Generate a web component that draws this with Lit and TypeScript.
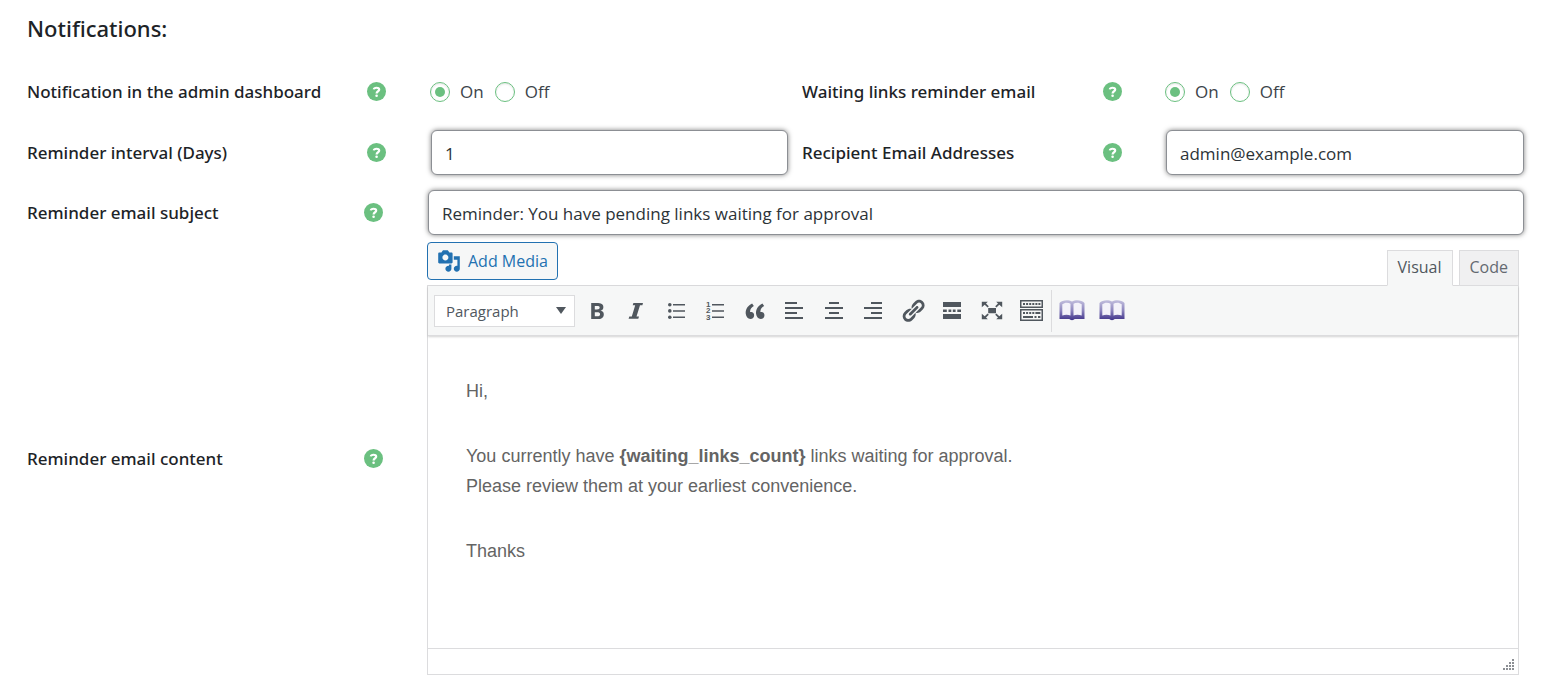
import { LitElement, html, css, svg } from "lit";
import type { SVGTemplateResult } from "lit";
import { customElement, property } from "lit/decorators.js";

const digits = (n: number, y: number) => svg`<text x="4" y=${y}>${n}</text>`;

const icons: Record<string, SVGTemplateResult> = {
  bold: svg`<g transform="translate(-1.2 .2) scale(1.4 1.23)"><path d="M6 4v13h4.54c1.37 0 2.46-.33 3.26-1 .8-.66 1.2-1.58 1.2-2.77 0-.84-.17-1.51-.51-2.01s-.9-.85-1.67-1.03v-.09c.57-.1 1.02-.4 1.36-.9s.51-1.13.51-1.91c0-1.14-.39-1.98-1.17-2.5C12.75 4.26 11.5 4 9.78 4H6zm2.57 5.15V6.26h1.36c.73 0 1.27.11 1.61.32.34.22.51.58.51 1.07 0 .54-.16.92-.47 1.15s-.82.35-1.51.35h-1.5zm0 2.19h1.6c1.44 0 2.16.53 2.16 1.61 0 .6-.17 1.05-.51 1.34s-.86.43-1.57.43H8.57v-3.38z"/></g>`,
  italic: svg`<path d="M10.4 5h9.6l-.6 2.2H17L13.5 18.600h2.500l-.7 2.200H5.600l.7-2.200h2.500L12.200 7.200H9.700z"/>`,
  bullets: svg`<circle cx="6.8" cy="6.7" r="1.8"/><circle cx="6.8" cy="12.9" r="1.8"/><circle cx="6.8" cy="19.2" r="1.8"/><path d="M10 6h12v1.5H10zM10 12.2h12v1.5H10zM10 18.6h12v1.5H10z"/>`,
  numbers: svg`<g font-family="Liberation Sans, sans-serif" font-size="8" font-weight="700">${digits(1, 9)}${digits(2, 15.4)}${digits(3, 21.8)}</g><path d="M10 6h12v1.5H10zM10 12.2h12v1.5H10zM10 18.6h12v1.5H10z"/>`,
  quote: svg`<g transform="translate(0 .4) scale(1.28)"><path d="M9.49 13.22c0-.74-.2-1.38-.61-1.9-.62-.78-1.83-.88-2.53-.72-.29-1.65 1.11-3.75 2.92-4.65L7.88 4c-2.73 1.3-5.42 4.28-4.96 8.05C3.21 14.43 4.59 16 6.54 16c.85 0 1.56-.25 2.12-.75s.83-1.18.83-2.03zm8.05 0c0-.74-.2-1.38-.61-1.9-.63-.78-1.83-.88-2.53-.72-.29-1.65 1.11-3.75 2.92-4.65L15.93 4c-2.73 1.3-5.41 4.28-4.95 8.05.29 2.38 1.66 3.95 3.61 3.95.85 0 1.56-.25 2.12-.75s.83-1.18.83-2.03z"/></g>`,
  left: svg`<path d="M4 4h12v2H4zM4 9h18v2H4zM4 14h12v2H4zM4 19h18v2H4z"/>`,
  center: svg`<path d="M8 4h10v2H8zM4 9h18v2H4zM8 14h10v2H8zM4 19h18v2H4z"/>`,
  right: svg`<path d="M11 4h11v2H11zM4 9h18v2H4zM11 14h11v2H11zM4 19h18v2H4z"/>`,
  link: svg`<g transform="translate(.1 -.1) scale(1.29)"><path d="M17.74 2.76c1.68 1.69 1.68 4.41 0 6.1l-1.53 1.52c-1.12 1.12-2.7 1.47-4.14 1.09l2.62-2.61.76-.77.76-.76c.84-.84.84-2.2 0-3.04-.84-.85-2.2-.85-3.04 0l-.77.76-3.38 3.38c-.37-1.44-.02-3.02 1.1-4.14l1.52-1.53c1.69-1.68 4.42-1.68 6.1 0zM8.59 13.43l5.34-5.34c.42-.42.42-1.1 0-1.52-.44-.43-1.13-.39-1.53 0l-5.33 5.34c-.42.42-.42 1.1 0 1.52.44.43 1.13.39 1.52 0zm-.76 2.29l4.14-4.15c.38 1.44.03 3.02-1.09 4.14l-1.52 1.53c-1.69 1.68-4.41 1.68-6.1 0-1.68-1.68-1.68-4.42 0-6.1l1.53-1.52c1.12-1.12 2.7-1.47 4.14-1.1l-4.14 4.15c-.85.84-.85 2.2 0 3.05.84.84 2.2.84 3.04 0z"/></g>`,
  more: svg`<path d="M4 4h18v5H4zM4 11.4h3.8V14H4zM9.500 11.4h2.800V14H9.500zM13.800 11.4h2.800V14h-2.800zM18.300 11.4H22V14h-3.700zM4 16h18v5H4z"/>`,
  expand: svg`<path d="M9.200 9.900h7.800v5.400H9.200zM2.800 3.800h6L7 5.500l2.800 2.800-1.200 1.200-2.900-2.700-2.900 2.400zM23.200 3.800v5.400l-2.900-2.400-2.900 2.700-1.200-1.200L19 5.500l-1.800-1.700zM2.800 21.200v-5.400l2.900 2.400 2.900-2.700 1.200 1.200L7 19.500l1.800 1.700zM23.200 21.200h-6l1.800-1.700-2.800-2.800 1.200-1.200 2.900 2.700 2.900-2.400z"/>`,
  keyboard: svg`<path fill-rule="evenodd" d="M2 2h23v8H2zM3.5 3.5v5h20v-5zM2 11h23v12H2zM3.5 12.5v9h20v-9z"/><path d="M5 5h2v2H5zM8.1 5h2v2h-2zM11.2 5h2v2h-2zM14.3 5h2v2h-2zM17.4 5h2v2h-2zM20.4 5h2v2h-2zM5 14h2v2H5zM8.1 14h2v2h-2zM11.2 14h2v2h-2zM14.3 14h2v2h-2zM17.400 14h5v2h-5zM5 18h10v2H5zM16.500 18h2v2h-2zM20 18h2.400v2H20z"/>`,
  book: svg`<defs><linearGradient id="ink" gradientUnits="userSpaceOnUse" x1="0" y1="2" x2="0" y2="22"><stop offset="0" stop-color="#c3c0de"/><stop offset=".5" stop-color="#8f88bf"/><stop offset="1" stop-color="#43368c"/></linearGradient></defs>
    <path fill="url(#ink)" d="M.5 5C3 1.800 9.500 1.200 13 3.600C16.500 1.200 23 1.800 25.500 5V21H15.500C15 22.500 11 22.500 10.500 21H.5z"/>
    <path fill="#f3f2f9" d="M3.300 6.200C5.500 4.300 9.200 4.100 11.500 5.800V17.600C9.500 16.400 6 16.400 3.300 17.400zM14.500 5.800C16.800 4.100 20.500 4.300 22.700 6.200V17.400C20 16.400 16.500 16.400 14.500 17.600z"/>`,
};

@customElement("help-tip")
class HelpTip extends LitElement {
  static styles = css`
    :host { display: block; line-height: 0; }
    .tip { appearance: none; border: 0; padding: 0; background: none; color: #6bc080; width: 19px; height: 19px; }
    .glyph { width: 19px; height: 19px; fill: currentColor; }
    .mark { fill: none; stroke: #fff; stroke-width: 2.2; }
    .point { fill: #fff; }
  `;
  render() {
    return html`<button class="tip" type="button" aria-label="Help">
      <svg class="glyph" viewBox="0 0 19 19" aria-hidden="true">
        <circle cx="9.5" cy="9.5" r="9.5"/>
        <path class="mark" d="M6.800 7.300C7.100 5.300 12.300 5 12.200 7.700C12.100 9.400 9.600 9.200 9.600 11.500"/>
        <circle class="point" cx="9.6" cy="13.7" r="1.3"/>
      </svg>
    </button>`;
  }
}

@customElement("on-off")
class OnOff extends LitElement {
  @property() name = "";
  static styles = css`
    :host { display: block; }
    .group { display: flex; gap: 11px; }
    .choice { display: flex; align-items: center; gap: 10px; color: #3c434a; }
    .dot { appearance: none; box-sizing: border-box; display: grid; place-items: center; width: 20px; height: 20px; margin: 0; border: 1px solid #6bc080; border-radius: 50%; background: #fff; box-shadow: inset 0 1px 2px rgba(0, 0, 0, 0.1); }
    .dot:checked::before { content: ""; width: 10px; height: 10px; border-radius: 50%; background: #6bc080; }
  `;
  render() {
    return html`<div class="group" role="radiogroup" aria-label=${this.name}>
      <label class="choice"><input class="dot" type="radio" name="state" checked />On</label>
      <label class="choice"><input class="dot" type="radio" name="state" />Off</label>
    </div>`;
  }
}

@customElement("mail-editor")
class MailEditor extends LitElement {
  static styles = css`
    :host { display: block; color: #50575e; font-size: 16px; }
    .head { display: flex; justify-content: space-between; align-items: flex-start; height: 43px; }
    .media { box-sizing: border-box; display: flex; align-items: center; gap: 7px; height: 38px; padding: 0 9px; border: 1px solid #2271b1; border-radius: 4px; background: #f6f7f7; color: #2271b1; font: inherit; white-space: nowrap; }
    .camera { width: 24px; height: 24px; fill: currentColor; }
    .tabs { display: flex; gap: 6px; align-self: flex-end; margin-bottom: -1px; position: relative; }
    .tab { box-sizing: border-box; height: 36px; padding: 0 10px 2px; border: 1px solid #dcdcde; background: #f0f0f1; color: #646970; font: inherit; }
    .tab.active { border-bottom-color: #f6f7f7; background: #f6f7f7; color: #50575e; }
    .frame { border: 1px solid #dcdcde; background: #fff; }
    .toolbar { display: flex; align-items: center; height: 50px; padding-left: 6px; box-sizing: border-box; background: #f6f7f7; border-bottom: 1px solid #dcdcde; box-shadow: 0 1px 2px rgba(0, 0, 0, 0.18); }
    .format { display: grid; align-items: center; width: 141px; }
    .select, .arrow { grid-area: 1 / 1; }
    .select { appearance: none; box-sizing: border-box; width: 100%; height: 32px; padding: 0 11px; border: 1px solid #dcdcde; border-radius: 0; background: #fff; color: #50575e; font: inherit; font-size: 15px; }
    .arrow { justify-self: end; margin-right: 9px; width: 10px; height: 7px; fill: #50575e; pointer-events: none; }
    .tools { display: grid; grid-template-columns: repeat(12, 1fr); width: 474px; margin-left: 2px; }
    .extras { display: grid; grid-template-columns: repeat(2, 1fr); width: 80px; height: 42px; align-items: center; border-left: 1px solid #dcdcde; }
    .tool { display: grid; place-items: center; padding: 0; height: 34px; border: 0; background: none; color: #50575e; }
    .icon { width: 26px; height: 26px; fill: currentColor; }
    .body { box-sizing: border-box; min-height: 312px; padding: 40px 38px 38px; outline: 0; color: #646464; font-family: "Liberation Sans", Arial, sans-serif; font-size: 18px; line-height: 30px; }
    .para { margin: 0 0 35px; }
    .status { display: flex; justify-content: flex-end; align-items: flex-end; height: 25px; border-top: 1px solid #dcdcde; }
    .grip { width: 12px; height: 12px; margin: 0 4px 3px 0; fill: #8c8f94; }
  `;
  private tool(name: string, label: string) {
    return html`<button class="tool" type="button" aria-label=${label}><svg class="icon" viewBox="0 0 26 26" aria-hidden="true">${icons[name]}</svg></button>`;
  }
  render() {
    const tools = [
      ["bold", "Bold"], ["italic", "Italic"], ["bullets", "Bulleted list"], ["numbers", "Numbered list"],
      ["quote", "Blockquote"], ["left", "Align left"], ["center", "Align center"], ["right", "Align right"],
      ["link", "Insert link"], ["more", "Read more tag"], ["expand", "Fullscreen"], ["keyboard", "Toolbar toggle"],
    ];
    return html`
      <div class="head">
        <button class="media" type="button">
          <svg class="camera" viewBox="0 0 20 20" aria-hidden="true"><path d="M13 11V4c0-.55-.45-1-1-1h-1.67L9 1H5L3.67 3H2c-.55 0-1 .45-1 1v7c0 .55.45 1 1 1h10c.55 0 1-.45 1-1zM7 4.5c1.38 0 2.5 1.12 2.5 2.5S8.38 9.5 7 9.5 4.5 8.38 4.5 7 5.62 4.5 7 4.5zM14 6h5v10.5c0 1.38-1.12 2.5-2.5 2.5S14 17.88 14 16.5s1.12-2.5 2.5-2.5c.17 0 .34.02.5.05V9h-3V6zm-4 8.05V13h2v3.5c0 1.38-1.12 2.5-2.5 2.5S7 17.88 7 16.5 8.12 14 9.5 14c.17 0 .34.02.5.05z"/></svg>
          Add Media
        </button>
        <div class="tabs">
          <button class="tab active" type="button">Visual</button>
          <button class="tab" type="button">Code</button>
        </div>
      </div>
      <div class="frame">
        <div class="toolbar" role="toolbar">
          <div class="format">
            <select class="select" aria-label="Text format"><option>Paragraph</option></select>
            <svg class="arrow" viewBox="0 0 10 7" aria-hidden="true"><path d="M0 0h10L5 7z"/></svg>
          </div>
          <div class="tools">${tools.map(([name, label]) => this.tool(name, label))}</div>
          <div class="extras">${this.tool("book", "Dictionary")}${this.tool("book", "Glossary")}</div>
        </div>
        <div class="body" contenteditable="true" role="textbox" aria-multiline="true" aria-label="Reminder email content" spellcheck="false">
          <p class="para">Hi,</p>
          <p class="para">You currently have <strong>{waiting_links_count}</strong> links waiting for approval.<br />Please review them at your earliest convenience.</p>
          <p class="para">Thanks</p>
        </div>
        <div class="status">
          <svg class="grip" viewBox="0 0 12 12" aria-hidden="true">
            ${[0, 1, 2, 3].map((row) => Array.from({ length: row + 1 }, (_, i) => svg`<rect x=${10 - i * 3} y=${row * 3} width="2" height="2"/>`))}
          </svg>
        </div>
      </div>
    `;
  }
}

@customElement("app-root")
class AppRoot extends LitElement {
  static styles = css`
    :host { display: block; font-family: "Open Sans", "Noto Sans", sans-serif; font-size: 17px; line-height: 24px; color: #1d2327; background: #fff; }
    .panel { padding: 13px 26px 15px 27px; }
    .title, .name { font-family: "Noto Sans", "Open Sans", sans-serif; font-weight: 500; }
    .title { margin: 0 0 33px; font-size: 22px; line-height: 30px; }
    .row { display: grid; align-items: center; }
    .pair { grid-template-columns: 340fr 64fr 357fr 14fr 301fr 63fr 358fr; }
    .full { grid-template-columns: 337fr 64fr 1096fr; }
    .switches { min-height: 31px; margin-bottom: 23px; }
    .switch { margin-left: -1px; }
    .interval { margin-bottom: 15px; }
    .subject { margin-bottom: 7px; }
    .second { grid-column: 5; }
    .name { white-space: nowrap; }
    .field { box-sizing: border-box; width: 100%; min-width: 0; height: 45px; padding: 1px 13px 0; border: 1px solid #8c8f94; border-radius: 6px; background: #fff; box-shadow: 0 0 5px rgba(0, 0, 0, 0.5); color: #2c3338; font: inherit; }
    .editor { margin-right: 5px; margin-left: -1px; }
  `;
  render() {
    return html`
      <form class="panel">
        <h2 class="title">Notifications:</h2>
        <div class="row pair switches">
          <span class="name">Notification in the admin dashboard</span>
          <help-tip></help-tip>
          <on-off class="switch" name="Notification in the admin dashboard"></on-off>
          <span class="name second">Waiting links reminder email</span>
          <help-tip></help-tip>
          <on-off class="switch" name="Waiting links reminder email"></on-off>
        </div>
        <div class="row pair interval">
          <label class="name" for="interval">Reminder interval (Days)</label>
          <help-tip></help-tip>
          <input class="field" id="interval" type="text" inputmode="numeric" value="1" />
          <label class="name second" for="recipients">Recipient Email Addresses</label>
          <help-tip></help-tip>
          <input class="field" id="recipients" type="email" value="admin@example.com" />
        </div>
        <div class="row full subject">
          <label class="name" for="subject">Reminder email subject</label>
          <help-tip></help-tip>
          <input class="field" id="subject" type="text" value="Reminder: You have pending links waiting for approval" />
        </div>
        <div class="row full">
          <span class="name">Reminder email content</span>
          <help-tip></help-tip>
          <mail-editor class="editor"></mail-editor>
        </div>
      </form>
    `;
  }
}
